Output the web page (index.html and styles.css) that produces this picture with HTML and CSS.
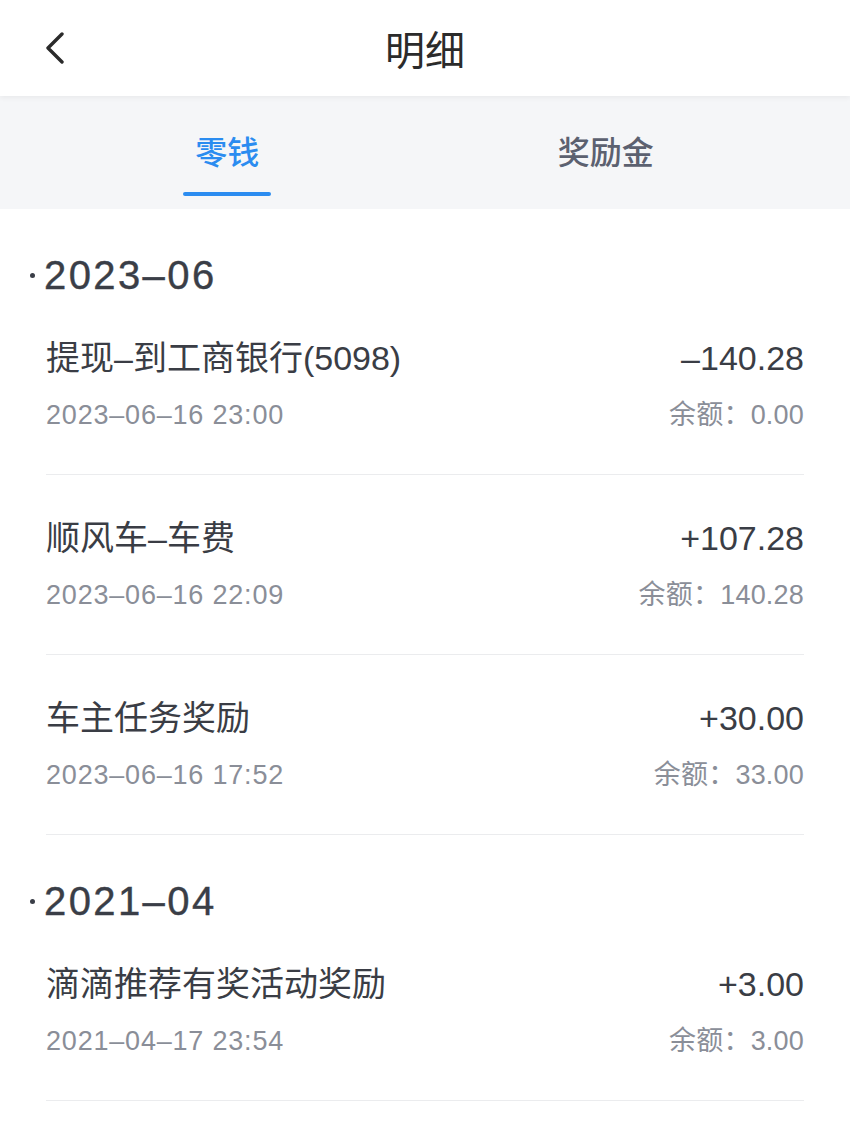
FILE: index.html
```html
<!DOCTYPE html>
<html lang="zh-CN">
<head>
  <meta charset="UTF-8" />
  <meta name="viewport" content="width=device-width, initial-scale=1.0" />
  <title>明细</title>
  <link rel="stylesheet" href="styles.css">
</head>
<body>
  <header class="topbar">
    <div class="back">
      <svg width="20" height="32" viewBox="0 0 20 32">
        <polyline points="17,2 3,16 17,30" fill="none" stroke="#2b2b2b" stroke-width="3.4" stroke-linecap="round" stroke-linejoin="round"/>
      </svg>
    </div>
    <h1>明细</h1>
    <div></div>
  </header>

  <nav class="tabs">
    <div class="tab active">
      <span>零钱</span>
      <i class="bar"></i>
    </div>
    <div class="tab">
      <span>奖励金</span>
      <i class="bar"></i>
    </div>
  </nav>

  <main class="list">
    <div class="month"><i class="dot"></i>2023–06</div>
    <div class="item">
      <div class="name">提现–到工商银行(5098)</div>
      <div class="amount">–140.28</div>
      <div class="time">2023–06–16 23:00</div>
      <div class="balance">余额：0.00</div>
    </div>
    <div class="item">
      <div class="name">顺风车–车费</div>
      <div class="amount">+107.28</div>
      <div class="time">2023–06–16 22:09</div>
      <div class="balance">余额：140.28</div>
    </div>
    <div class="item">
      <div class="name">车主任务奖励</div>
      <div class="amount">+30.00</div>
      <div class="time">2023–06–16 17:52</div>
      <div class="balance">余额：33.00</div>
    </div>

    <div class="month"><i class="dot"></i>2021–04</div>
    <div class="item">
      <div class="name">滴滴推荐有奖活动奖励</div>
      <div class="amount">+3.00</div>
      <div class="time">2021–04–17 23:54</div>
      <div class="balance">余额：3.00</div>
    </div>
  </main>
</body>
</html>
```

FILE: styles.css
```css
body {
  font-family: "Liberation Sans", "Noto Sans CJK SC", sans-serif;
  margin: 0;
  padding: 0;
  background-color: #fff;
  color: #3a3d45;
}
.topbar {
  height: 96px;
  display: grid;
  grid-template-columns: 1fr auto 1fr;
  align-items: center;
  background-color: #fff;
  box-shadow: 0 2px 5px rgba(0, 0, 0, 0.05);
  position: relative;
  z-index: 1;
}
.back {
  padding-left: 45px;
  display: flex;
  align-items: center;
}
.topbar h1 {
  margin: 0;
  font-family: "Noto Sans CJK SC", sans-serif;
  font-size: 40px;
  font-weight: 400;
  color: #2b2b2b;
}
.tabs {
  display: flex;
  height: 113px;
  padding: 0 55px 0 38px;
  background-color: #f5f6f8;
}
.tab {
  flex: 1;
  display: flex;
  flex-direction: column;
  align-items: center;
  padding-top: 32px;
  font-family: "Noto Sans CJK SC", sans-serif;
  font-size: 32px;
  font-weight: 500;
  line-height: 44px;
  color: #5c6170;
}
.tab .bar {
  width: 88px;
  height: 4px;
  margin-top: 20px;
  border-radius: 3px;
}
.tab.active {
  color: #2b8cf0;
}
.tab.active .bar {
  background-color: #2b8cf0;
}
.list {
  padding: 0 46px;
}
.month {
  display: flex;
  align-items: center;
  margin-left: -16px;
  padding-top: 46px;
  font-size: 40px;
  line-height: 40px;
  letter-spacing: 2.4px;
  color: #3a3e47;
  -webkit-text-stroke: 0.4px #3a3e47;
}
.dot {
  width: 5px;
  height: 5px;
  border-radius: 50%;
  background-color: #3a3e47;
  margin-right: 9px;
}
.item {
  display: grid;
  grid-template-columns: 1fr auto;
  row-gap: 20px;
  padding: 43px 0 42px;
  border-bottom: 1px solid #ebecee;
}
.name, .amount {
  font-size: 34px;
  line-height: 40px;
  color: #3a3d45;
}
.amount {
  text-align: right;
}
.time, .balance {
  font-size: 27px;
  line-height: 34px;
  letter-spacing: 0.8px;
  color: #8a8e98;
}
.balance {
  text-align: right;
  letter-spacing: 0.2px;
}
```
